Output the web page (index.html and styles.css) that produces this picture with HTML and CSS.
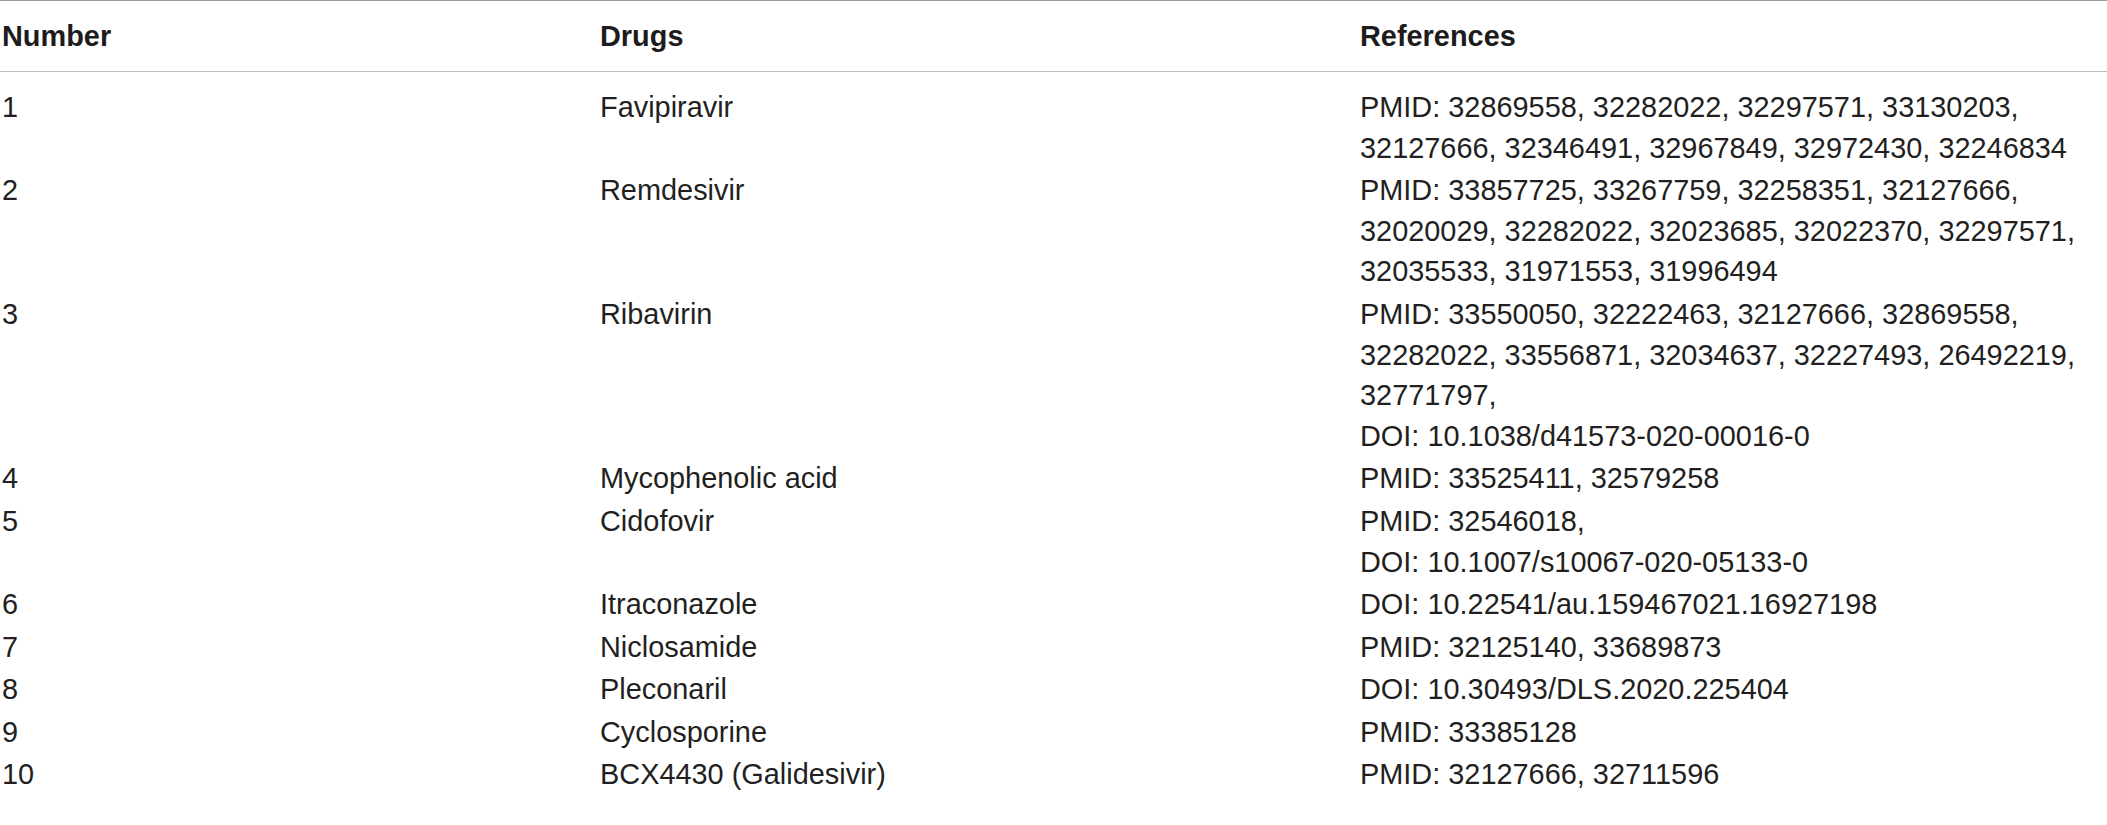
FILE: index.html
```html
<!DOCTYPE html>
<html lang="en">
<head>
<meta charset="utf-8">
<title>Drugs table</title>
<link rel="stylesheet" href="styles.css">
</head>
<body>
<table class="drug-table">
  <colgroup>
    <col class="col-num">
    <col class="col-drug">
    <col class="col-ref">
  </colgroup>
  <thead>
    <tr>
      <th class="c-num">Number</th>
      <th>Drugs</th>
      <th>References</th>
    </tr>
  </thead>
  <tbody>
    <tr>
      <td class="c-num">1</td>
      <td>Favipiravir</td>
      <td>PMID: 32869558, 32282022, 32297571, 33130203,<br>32127666, 32346491, 32967849, 32972430, 32246834</td>
    </tr>
    <tr>
      <td class="c-num">2</td>
      <td>Remdesivir</td>
      <td>PMID: 33857725, 33267759, 32258351, 32127666,<br>32020029, 32282022, 32023685, 32022370, 32297571,<br>32035533, 31971553, 31996494</td>
    </tr>
    <tr>
      <td class="c-num">3</td>
      <td>Ribavirin</td>
      <td>PMID: 33550050, 32222463, 32127666, 32869558,<br>32282022, 33556871, 32034637, 32227493, 26492219,<br>32771797,<br>DOI: 10.1038/d41573-020-00016-0</td>
    </tr>
    <tr>
      <td class="c-num">4</td>
      <td>Mycophenolic acid</td>
      <td>PMID: 33525411, 32579258</td>
    </tr>
    <tr>
      <td class="c-num">5</td>
      <td>Cidofovir</td>
      <td>PMID: 32546018,<br>DOI: 10.1007/s10067-020-05133-0</td>
    </tr>
    <tr>
      <td class="c-num">6</td>
      <td>Itraconazole</td>
      <td>DOI: 10.22541/au.159467021.16927198</td>
    </tr>
    <tr>
      <td class="c-num">7</td>
      <td>Niclosamide</td>
      <td>PMID: 32125140, 33689873</td>
    </tr>
    <tr>
      <td class="c-num">8</td>
      <td>Pleconaril</td>
      <td>DOI: 10.30493/DLS.2020.225404</td>
    </tr>
    <tr>
      <td class="c-num">9</td>
      <td>Cyclosporine</td>
      <td>PMID: 33385128</td>
    </tr>
    <tr>
      <td class="c-num">10</td>
      <td>BCX4430 (Galidesivir)</td>
      <td>PMID: 32127666, 32711596</td>
    </tr>
  </tbody>
</table>
</body>
</html>
```

FILE: styles.css
```css
html, body {
  margin: 0;
  padding: 0;
  background: #ffffff;
}

body {
  font-family: "Liberation Sans", Arial, Helvetica, sans-serif;
  font-size: 28.9px;
  line-height: 40.6px;
  color: #231f20;
}

.drug-table {
  width: 2107px;
  border-collapse: collapse;
  border-spacing: 0;
  table-layout: fixed;
  border-top: 1px solid #9c9c9c;
}

.col-num { width: 600px; }
.col-drug { width: 760px; }
.col-ref { width: 747px; }

.drug-table th,
.drug-table td {
  padding: 2px 0 0 0;
  text-align: left;
  vertical-align: top;
  white-space: nowrap;
}

.drug-table th {
  font-weight: bold;
  color: #1e1b1c;
  padding-top: 15px;
  padding-bottom: 14.4px;
  border-bottom: 1px solid #bdbdbd;
}

.drug-table tbody tr:first-child td {
  padding-top: 15px;
}

.c-num {
  text-indent: 2px;
}
```
